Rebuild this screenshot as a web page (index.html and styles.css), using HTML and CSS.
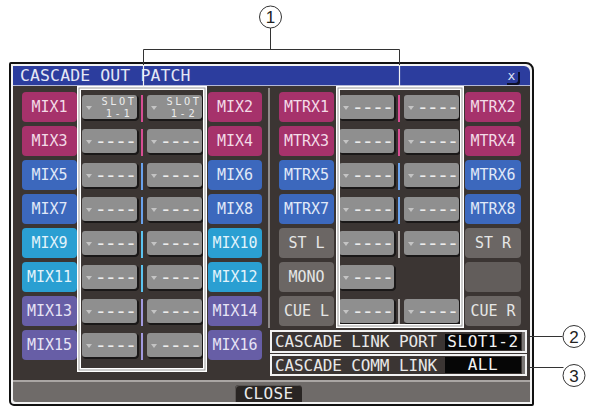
FILE: index.html
```html
<!DOCTYPE html>
<html>
<head>
<meta charset="utf-8">
<link rel="stylesheet" href="styles.css">
</head>
<body>
<div class="page">
  <div class="window">
    <div class="frame">
      <div class="titlebar">
        <span class="title">CASCADE OUT PATCH</span>
        <span class="xbtn">x</span>
      </div>
      <div class="body">
        <div class="col left">
          <div class="row pink">
            <span class="lbl">MIX1</span>
            <span class="btn"><i class="tri"></i><span class="slot"><span class="sl">SLOT</span><span class="sl">1-1</span></span></span>
            <span class="link"></span>
            <span class="btn"><i class="tri"></i><span class="slot"><span class="sl">SLOT</span><span class="sl">1-2</span></span></span>
            <span class="lbl r">MIX2</span>
          </div>
          <div class="row pink">
            <span class="lbl">MIX3</span>
            <span class="btn"><i class="tri"></i><span class="dash">----</span></span>
            <span class="link"></span>
            <span class="btn"><i class="tri"></i><span class="dash">----</span></span>
            <span class="lbl r">MIX4</span>
          </div>
          <div class="row blue">
            <span class="lbl">MIX5</span>
            <span class="btn"><i class="tri"></i><span class="dash">----</span></span>
            <span class="link"></span>
            <span class="btn"><i class="tri"></i><span class="dash">----</span></span>
            <span class="lbl r">MIX6</span>
          </div>
          <div class="row blue">
            <span class="lbl">MIX7</span>
            <span class="btn"><i class="tri"></i><span class="dash">----</span></span>
            <span class="link"></span>
            <span class="btn"><i class="tri"></i><span class="dash">----</span></span>
            <span class="lbl r">MIX8</span>
          </div>
          <div class="row cyan">
            <span class="lbl">MIX9</span>
            <span class="btn"><i class="tri"></i><span class="dash">----</span></span>
            <span class="link"></span>
            <span class="btn"><i class="tri"></i><span class="dash">----</span></span>
            <span class="lbl r">MIX10</span>
          </div>
          <div class="row cyan">
            <span class="lbl">MIX11</span>
            <span class="btn"><i class="tri"></i><span class="dash">----</span></span>
            <span class="link"></span>
            <span class="btn"><i class="tri"></i><span class="dash">----</span></span>
            <span class="lbl r">MIX12</span>
          </div>
          <div class="row purple">
            <span class="lbl">MIX13</span>
            <span class="btn"><i class="tri"></i><span class="dash">----</span></span>
            <span class="link"></span>
            <span class="btn"><i class="tri"></i><span class="dash">----</span></span>
            <span class="lbl r">MIX14</span>
          </div>
          <div class="row purple">
            <span class="lbl">MIX15</span>
            <span class="btn"><i class="tri"></i><span class="dash">----</span></span>
            <span class="link"></span>
            <span class="btn"><i class="tri"></i><span class="dash">----</span></span>
            <span class="lbl r">MIX16</span>
          </div>
        </div>
        <div class="sep"></div>
        <div class="col right">
          <div class="row pink">
            <span class="lbl">MTRX1</span>
            <span class="btn"><i class="tri"></i><span class="dash">----</span></span>
            <span class="link"></span>
            <span class="btn"><i class="tri"></i><span class="dash">----</span></span>
            <span class="lbl r">MTRX2</span>
          </div>
          <div class="row pink">
            <span class="lbl">MTRX3</span>
            <span class="btn"><i class="tri"></i><span class="dash">----</span></span>
            <span class="link"></span>
            <span class="btn"><i class="tri"></i><span class="dash">----</span></span>
            <span class="lbl r">MTRX4</span>
          </div>
          <div class="row blue">
            <span class="lbl">MTRX5</span>
            <span class="btn"><i class="tri"></i><span class="dash">----</span></span>
            <span class="link"></span>
            <span class="btn"><i class="tri"></i><span class="dash">----</span></span>
            <span class="lbl r">MTRX6</span>
          </div>
          <div class="row blue">
            <span class="lbl">MTRX7</span>
            <span class="btn"><i class="tri"></i><span class="dash">----</span></span>
            <span class="link"></span>
            <span class="btn"><i class="tri"></i><span class="dash">----</span></span>
            <span class="lbl r">MTRX8</span>
          </div>
          <div class="row gray">
            <span class="lbl">ST L</span>
            <span class="btn"><i class="tri"></i><span class="dash">----</span></span>
            <span class="link"></span>
            <span class="btn"><i class="tri"></i><span class="dash">----</span></span>
            <span class="lbl r">ST R</span>
          </div>
          <div class="row gray">
            <span class="lbl">MONO</span>
            <span class="btn"><i class="tri"></i><span class="dash">----</span></span>
            <span class="link none"></span>
            <span class="btn none"></span>
            <span class="lbl r empty"></span>
          </div>
          <div class="row gray">
            <span class="lbl">CUE L</span>
            <span class="btn"><i class="tri"></i><span class="dash">----</span></span>
            <span class="link"></span>
            <span class="btn"><i class="tri"></i><span class="dash">----</span></span>
            <span class="lbl r">CUE R</span>
          </div>
        </div>
        <div class="cascade">
          <div class="cbox tall">
            <span class="ctext">CASCADE LINK PORT</span>
            <span class="field">SLOT1-2</span>
          </div>
          <div class="cbox">
            <span class="ctext">CASCADE COMM LINK</span>
            <span class="field">ALL</span>
          </div>
        </div>
      </div>
      <div class="footer">
        <span class="closebtn">CLOSE</span>
      </div>
    </div>
  </div>
  <svg class="annot" width="590" height="409" viewBox="0 0 590 409">
    <g fill="none">
      <rect x="79" y="88" width="126" height="282" stroke="#ffffff" stroke-width="4"/>
      <rect x="79" y="88" width="126" height="282" stroke="#9a9a9a" stroke-width="1"/>
      <rect x="338" y="88" width="124" height="238" stroke="#ffffff" stroke-width="4"/>
      <rect x="338" y="88" width="124" height="238" stroke="#9a9a9a" stroke-width="1"/>
      <path d="M143.5 65 V49.5 H399.5 V65" stroke="#333333" stroke-width="1"/>
      <path d="M143.5 65 V87 M399.5 65 V87" stroke="#f2f2f2" stroke-width="1.2"/>
      <path d="M270.5 28 V49.5" stroke="#333333" stroke-width="1"/>
      <path d="M527 336.5 H562.5" stroke="#333333" stroke-width="1"/>
      <path d="M527 367.5 H563.5" stroke="#333333" stroke-width="1"/>
      <circle cx="270.5" cy="17" r="11" stroke="#333333" stroke-width="1" fill="#ffffff"/>
      <circle cx="574" cy="336.5" r="11" stroke="#333333" stroke-width="1" fill="#ffffff"/>
      <circle cx="574" cy="375.5" r="11" stroke="#333333" stroke-width="1" fill="#ffffff"/>
    </g>
    <g class="num">
      <text x="270.5" y="23">1</text>
      <text x="574" y="342.5">2</text>
      <text x="574" y="381.5">3</text>
    </g>
  </svg>
</div>
</body>
</html>
```

FILE: styles.css
```css
html, body {
  margin: 0;
  padding: 0;
  background: #ffffff;
}

body {
  width: 590px;
  height: 409px;
  overflow: hidden;
  font-family: "DejaVu Sans Mono", "Liberation Mono", monospace;
}

.page {
  position: relative;
  width: 590px;
  height: 409px;
  box-sizing: border-box;
  padding: 62px 0 0 9px;
}

.window {
  width: 525px;
  height: 344px;
  box-sizing: border-box;
  border: 2px solid #111111;
  border-radius: 2px 8px 2px 5px;
  background: #f2f2f2;
  padding: 2px;
}

.frame {
  height: 100%;
  display: flex;
  flex-direction: column;
  border-radius: 0 6px 0 3px;
  overflow: hidden;
}

.titlebar {
  height: 19px;
  flex: 0 0 19px;
  background: #2c3d9e;
  border-bottom: 1px solid #b4b8d6;
  display: flex;
  align-items: center;
  padding-left: 7px;
  padding-right: 12px;
}

.title {
  color: #e4e7f5;
  font-size: 16.5px;
  line-height: 19px;
  letter-spacing: 0.1px;
}

.xbtn {
  margin-left: auto;
  width: 13px;
  height: 13px;
  margin-top: 2px;
  color: #dfe3f5;
  font-size: 13px;
  line-height: 11px;
  text-align: center;
  box-shadow: 2px 2px 0 #0c0f2a;
  border-radius: 0 0 3px 0;
}

.body {
  flex: 1;
  background: #3b3533;
  padding: 6px 8px 0 9px;
  display: grid;
  grid-template-columns: 240px 6px 2px 9px 241px;
  grid-template-rows: 234px auto;
  align-content: start;
}

.col {
  display: flex;
  flex-direction: column;
  gap: 4px;
}

.left {
  grid-column: 1;
  grid-row: 1 / 3;
}

.sep {
  grid-column: 3;
  grid-row: 1;
  background: #8e8a88;
  margin-top: -4px;
  margin-bottom: -2px;
}

.right {
  grid-column: 5;
  grid-row: 1;
}

.row {
  display: flex;
  height: 30px;
}

.lbl {
  width: 55px;
  flex: 0 0 55px;
  margin-right: 5px;
  border-radius: 4px;
  background: var(--c);
  color: var(--t);
  font-size: 15px;
  display: flex;
  align-items: center;
  justify-content: center;
  white-space: pre;
  overflow: hidden;
}

.lbl.r {
  margin-right: 0;
  margin-left: 6px;
  flex-basis: 54px;
  width: 54px;
}

.right .lbl.r {
  flex-basis: 56px;
  width: 56px;
}

.btn {
  width: 55px;
  flex: 0 0 55px;
  height: 24px;
  margin-top: 3px;
  box-sizing: border-box;
  background: #8f8f8f;
  border-radius: 3px;
  box-shadow: 1px 2px 0 #1a1818, 2px 1px 0 #1a1818;
  display: flex;
  align-items: center;
  padding: 0 1px 0 4px;
  color: #ececec;
  overflow: hidden;
}

.btn.none {
  visibility: hidden;
}

.tri {
  flex: 0 0 auto;
  width: 0;
  height: 0;
  border-left: 3px solid transparent;
  border-right: 3px solid transparent;
  border-top: 4px solid #c4c4c4;
  margin-top: 1px;
}

.dash {
  margin-left: auto;
  font-size: 20px;
  line-height: 20px;
  letter-spacing: -2px;
  margin-right: 1px;
}

.slot {
  margin-left: auto;
  margin-right: 2px;
  display: flex;
  flex-direction: column;
  align-items: center;
}

.sl {
  font-size: 10.3px;
  line-height: 12px;
  height: 12px;
  letter-spacing: 2.6px;
  margin-right: -2.6px;
}

.link {
  width: 10px;
  flex: 0 0 10px;
}

.link::before {
  content: "";
  display: block;
  width: 2px;
  height: 27px;
  margin: 3px 0 0 4px;
  background: var(--l);
}

.link.none::before {
  display: none;
}

.lbl.empty {
  background: #625d5b;
}

.pink   { --c: #a6326b; --t: #f3dbe7; --l: #d64e93; }
.blue   { --c: #3c68bd; --t: #e0e9f8; --l: #6aa2ec; }
.cyan   { --c: #2a9fd2; --t: #e2f3fb; --l: #5cc4f0; }
.purple { --c: #675ea6; --t: #e6e3f5; --l: #a39be0; }
.gray   { --c: #6b6664; --t: #e6e6e6; --l: #b0acaa; }

.cascade {
  grid-column: 3 / 6;
  grid-row: 2;
  margin-top: 4px;
  margin-left: 2px;
  width: 257px;
  display: flex;
  flex-direction: column;
  gap: 1px;
}

.cbox {
  height: 22px;
  box-sizing: border-box;
  border: 2px solid #f2f2f2;
  background: #3b3533;
  display: flex;
  align-items: center;
  padding: 0 4px 0 3px;
  box-shadow: inset -3px 0 0 #7a7674;
}

.cbox.tall {
  height: 23px;
}

.ctext {
  color: #e8e8e8;
  font-size: 16px;
  letter-spacing: -0.1px;
}

.field {
  margin-left: auto;
  width: 76px;
  height: 16px;
  background: #060606;
  color: #f2f2f2;
  font-size: 16px;
  line-height: 16px;
  text-align: center;
  letter-spacing: 0.6px;
}

.footer {
  height: 20px;
  flex: 0 0 20px;
  border-top: 2px solid #aaa6a4;
  background: #6f6b69;
  display: flex;
  justify-content: center;
  align-items: flex-end;
}

.closebtn {
  width: 67px;
  height: 17px;
  margin-right: 6px;
  background: #292523;
  border-radius: 4px 4px 0 0;
  box-shadow: inset 1px 1px 0 #5a5654;
  color: #ebebeb;
  font-size: 16px;
  line-height: 17px;
  text-align: center;
  letter-spacing: 0.3px;
}

.annot {
  position: absolute;
  left: 0;
  top: 0;
  pointer-events: none;
}

.num text {
  font-family: "Liberation Sans", Arial, sans-serif;
  font-size: 17px;
  fill: #222222;
  text-anchor: middle;
}
```
